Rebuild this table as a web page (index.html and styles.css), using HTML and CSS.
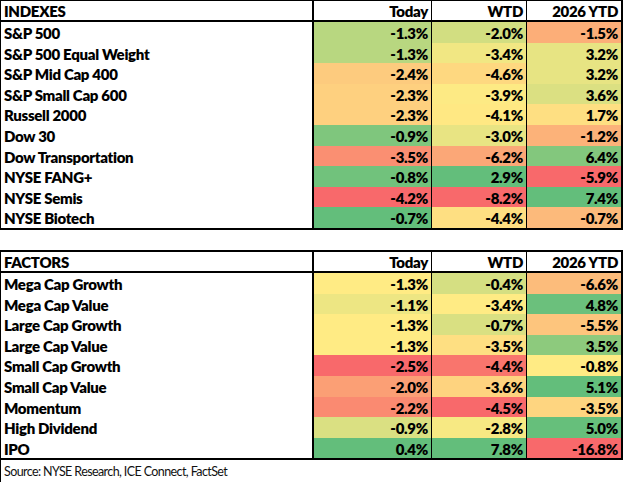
FILE: index.html
```html
<!DOCTYPE html>
<html>
<head>
<meta charset="utf-8">
<link rel="stylesheet" href="styles.css">
</head>
<body>
<div class="sheet">
  <div class="tbl tbl-first">
    <div class="row head"><div class="lbl">INDEXES</div><div class="num">Today</div><div class="num">WTD</div><div class="num last">2026 YTD</div></div>
    <div class="row"><div class="lbl">S&amp;P 500</div><div class="num" style="background:#B8D780">-1.3%</div><div class="num" style="background:#D2DE81">-2.0%</div><div class="num last" style="background:#FCAE78">-1.5%</div></div>
    <div class="row"><div class="lbl">S&amp;P 500 Equal Weight</div><div class="num" style="background:#B8D780">-1.3%</div><div class="num" style="background:#F1E783">-3.4%</div><div class="num last" style="background:#E7E483">3.2%</div></div>
    <div class="row"><div class="lbl">S&amp;P Mid Cap 400</div><div class="num" style="background:#FDCB7E">-2.4%</div><div class="num" style="background:#FED880">-4.6%</div><div class="num last" style="background:#E7E483">3.2%</div></div>
    <div class="row"><div class="lbl">S&amp;P Small Cap 600</div><div class="num" style="background:#FED07F">-2.3%</div><div class="num" style="background:#FDEA84">-3.9%</div><div class="num last" style="background:#DBE082">3.6%</div></div>
    <div class="row"><div class="lbl">Russell 2000</div><div class="num" style="background:#FED07F">-2.3%</div><div class="num" style="background:#FFE883">-4.1%</div><div class="num last" style="background:#FEDF82">1.7%</div></div>
    <div class="row"><div class="lbl">Dow 30</div><div class="num" style="background:#7FC67D">-0.9%</div><div class="num" style="background:#E8E483">-3.0%</div><div class="num last" style="background:#FCB279">-1.2%</div></div>
    <div class="row"><div class="lbl">Dow Transportation</div><div class="num" style="background:#FA8F72">-3.5%</div><div class="num" style="background:#FBA777">-6.2%</div><div class="num last" style="background:#83C77D">6.4%</div></div>
    <div class="row"><div class="lbl">NYSE FANG+</div><div class="num" style="background:#71C27C">-0.8%</div><div class="num" style="background:#63BE7B">2.9%</div><div class="num last" style="background:#F8696B">-5.9%</div></div>
    <div class="row"><div class="lbl">NYSE Semis</div><div class="num" style="background:#F8696B">-4.2%</div><div class="num" style="background:#F8696B">-8.2%</div><div class="num last" style="background:#63BE7B">7.4%</div></div>
    <div class="row"><div class="lbl">NYSE Biotech</div><div class="num" style="background:#63BE7B">-0.7%</div><div class="num" style="background:#FEDF82">-4.4%</div><div class="num last" style="background:#FCBA7B">-0.7%</div></div>
  </div>

  <div class="tbl tbl-second">
    <div class="row head"><div class="lbl">FACTORS</div><div class="num">Today</div><div class="num">WTD</div><div class="num last">2026 YTD</div></div>
    <div class="row"><div class="lbl">Mega Cap Growth</div><div class="num" style="background:#FFEB84">-1.3%</div><div class="num" style="background:#D5DF82">-0.4%</div><div class="num last" style="background:#FCBC7B">-6.6%</div></div>
    <div class="row"><div class="lbl">Mega Cap Value</div><div class="num" style="background:#EDE683">-1.1%</div><div class="num" style="background:#FFEB84">-3.4%</div><div class="num last" style="background:#6BC07C">4.8%</div></div>
    <div class="row"><div class="lbl">Large Cap Growth</div><div class="num" style="background:#FFEB84">-1.3%</div><div class="num" style="background:#D9E082">-0.7%</div><div class="num last" style="background:#FDC57D">-5.5%</div></div>
    <div class="row"><div class="lbl">Large Cap Value</div><div class="num" style="background:#FFEB84">-1.3%</div><div class="num" style="background:#FEDF82">-3.5%</div><div class="num last" style="background:#8DCA7D">3.5%</div></div>
    <div class="row"><div class="lbl">Small Cap Growth</div><div class="num" style="background:#F8696B">-2.5%</div><div class="num" style="background:#F9756D">-4.4%</div><div class="num last" style="background:#FFEB84">-0.8%</div></div>
    <div class="row"><div class="lbl">Small Cap Value</div><div class="num" style="background:#FB9F75">-2.0%</div><div class="num" style="background:#FED37F">-3.6%</div><div class="num last" style="background:#63BE7B">5.1%</div></div>
    <div class="row"><div class="lbl">Momentum</div><div class="num" style="background:#FA8A71">-2.2%</div><div class="num" style="background:#F8696B">-4.5%</div><div class="num last" style="background:#FED580">-3.5%</div></div>
    <div class="row"><div class="lbl">High Dividend</div><div class="num" style="background:#DAE082">-0.9%</div><div class="num" style="background:#F7E983">-2.8%</div><div class="num last" style="background:#66BF7B">5.0%</div></div>
    <div class="row"><div class="lbl">IPO</div><div class="num" style="background:#63BE7B">0.4%</div><div class="num" style="background:#63BE7B">7.8%</div><div class="num last" style="background:#F8696B">-16.8%</div></div>
  </div>
  <div class="source">Source: NYSE Research, ICE Connect, FactSet</div>
</div>
</body>
</html>
```

FILE: styles.css
```css
* { box-sizing: border-box; }
html, body { margin: 0; padding: 0; background: #ffffff; }
.sheet {
  width: 623px;
  font-family: Lato, "Liberation Sans", sans-serif;
  color: #000;
}
.tbl {
  border-left: 1px solid #000;
  border-right: 2px solid #000;
  border-top: 1px solid #000;
  border-bottom: 2px solid #000;
}
.tbl-second { margin-top: 20px; border-top-width: 2px; }
.row {
  display: grid;
  grid-template-columns: 313px 118px 95px 94px;
  height: 20.6px;
}
.row.head {
  height: 21px;
  border-bottom: 2px solid #000;
}
.lbl, .num {
  font-weight: 800;
  font-size: 15px;
  letter-spacing: -0.3px;
  line-height: 20.6px;
  padding-top: 1px;
  white-space: nowrap;
  overflow: hidden;
}
.lbl {
  padding-left: 3px;
  border-right: 2px solid #000;
  background: #fff;
}
.num {
  text-align: right;
  padding-right: 3px;
  border-right: 1px solid #000;
}
.num.last { border-right: none; }
.head .lbl, .head .num { line-height: 19px; background: #fff; }
.source {
  height: 24px;
  border-left: 1px solid #000;
  border-bottom: 2px solid #000;
  font-size: 12.5px;
  letter-spacing: -0.6px;
  line-height: 21px;
  padding-top: 1px;
  padding-left: 3px;
  color: #111;
}
```
